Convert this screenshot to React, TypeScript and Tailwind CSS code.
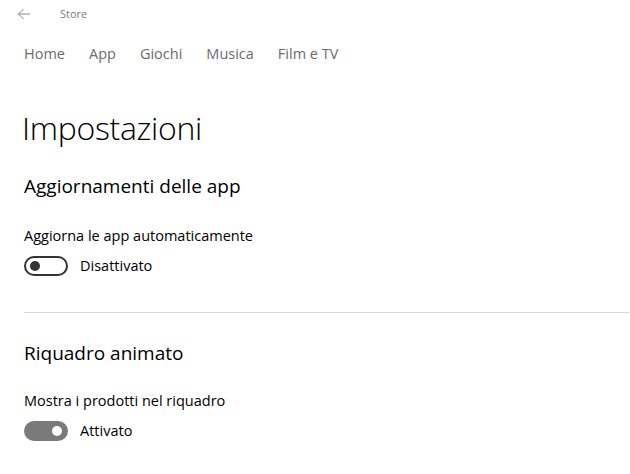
export default function App() {
  return (
    <div className="h-[474px] w-[630px] overflow-hidden bg-white font-['Open_Sans',sans-serif] text-[#000]">
      {/* title bar */}
      <div className="flex h-[28px] items-center">
        <div className="flex w-[48px] items-center justify-center">
          <svg width="14" height="12" viewBox="0 0 14 12" fill="none" stroke="#8a8a8a" strokeWidth="1">
            <path d="M13 6H1.5M6.5 1L1.5 6l5 5" />
          </svg>
        </div>
        <span className="ml-[12px] text-[11px] text-[#7a7a7a]">Store</span>
      </div>

      {/* nav */}
      <nav className="flex h-[52px] items-center gap-[24px] pl-[24px] text-[14.5px] text-[#6b6b6b]">
        <span>Home</span>
        <span>App</span>
        <span>Giochi</span>
        <span>Musica</span>
        <span>Film e TV</span>
      </nav>

      <div className="pl-[22px] pt-[26px]">
        <h1 className="text-[32px] leading-[44px] font-light tracking-[-0.3px]">Impostazioni</h1>
      </div>

      <section className="pl-[24px]">
        <h2 className="mt-[23px] text-[19px] leading-[26px]">Aggiornamenti delle app</h2>
        <p className="mt-[27px] text-[14.5px] leading-[20px]">Aggiorna le app automaticamente</p>
        <div className="mt-[10px] flex items-center gap-[12px]">
          <div className="flex h-[20px] w-[44px] items-center rounded-full border-2 border-[#333] pl-[4px]">
            <div className="h-[10px] w-[10px] rounded-full bg-[#333]" />
          </div>
          <span className="text-[14.5px] leading-[20px]">Disattivato</span>
        </div>
      </section>

      <div className="ml-[24px] mr-[1px] mt-[36px] h-px bg-[#d4d4d4]" />

      <section className="pl-[24px]">
        <h2 className="mt-[27px] text-[19px] leading-[26px]">Riquadro animato</h2>
        <p className="mt-[25px] text-[14.5px] leading-[20px]">Mostra i prodotti nel riquadro</p>
        <div className="mt-[10px] flex items-center gap-[12px]">
          <div className="flex h-[20px] w-[44px] items-center justify-end rounded-full bg-[#7a7a7a] pr-[6px]">
            <div className="h-[10px] w-[10px] rounded-full bg-white" />
          </div>
          <span className="text-[14.5px] leading-[20px]">Attivato</span>
        </div>
      </section>
    </div>
  );
}
